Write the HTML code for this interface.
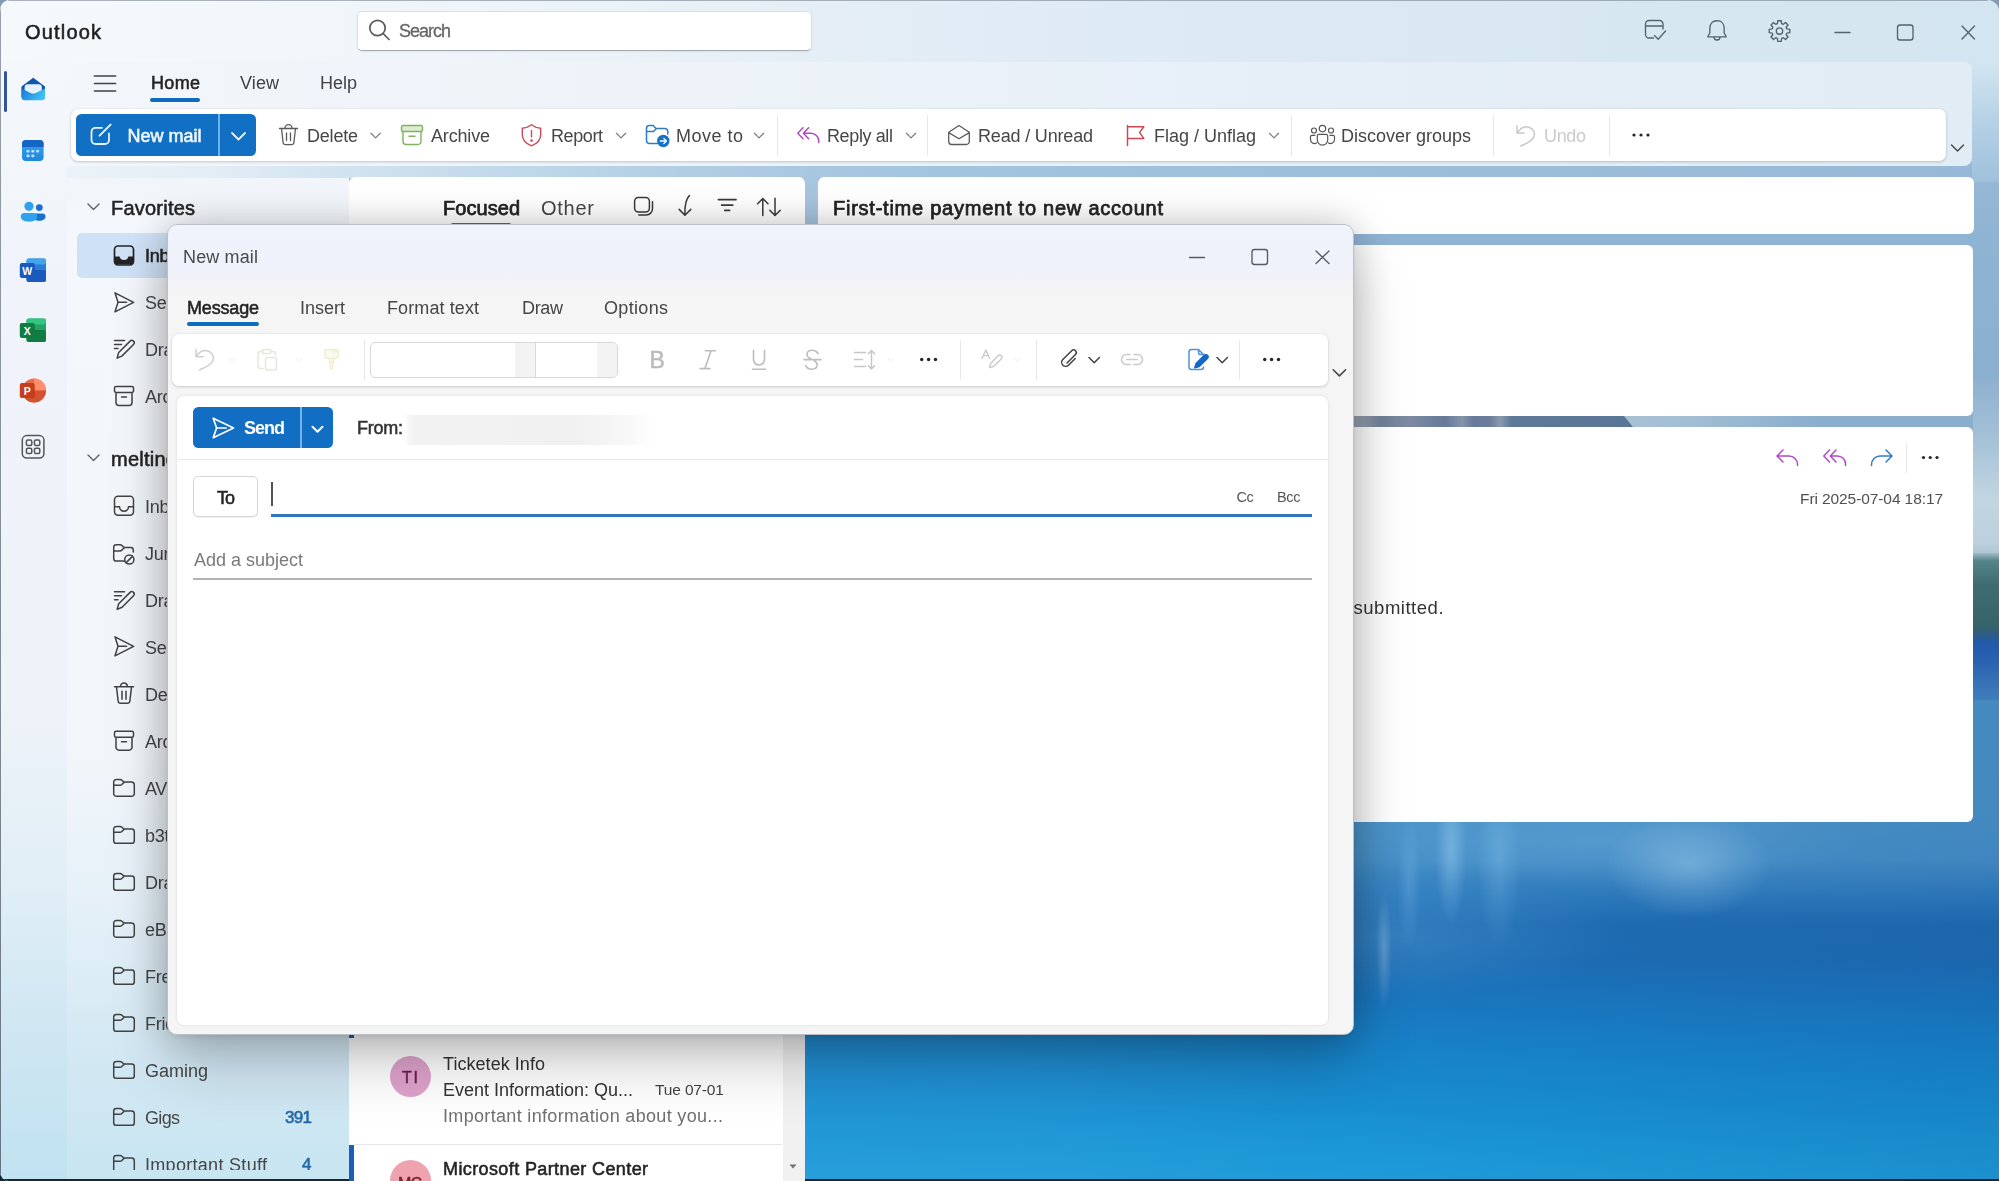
<!DOCTYPE html>
<html lang="en">
<head>
<meta charset="utf-8">
<title>Outlook - New mail</title>
<style>
*{box-sizing:border-box;margin:0;padding:0}
html,body{width:1999px;height:1181px;overflow:hidden;background:linear-gradient(180deg,#7f9bb5 0,#7f9bb5 50%,#1b2430 50%,#1b2430 100%)}
body{font-family:"Liberation Sans",sans-serif;position:relative}
#root{position:absolute;left:0;top:0;width:1999px;height:1181px;overflow:hidden;border-radius:10px 12px 0 9px;
 background:linear-gradient(180deg,#dfeaf4 0px,#c9dcec 60px,#a6c4dd 120px,#97b9d7 170px,#8fb3d2 240px,#8aaecd 420px,#86abc9 560px,#3f8fca 700px,#2a7fc2 830px,#1f78be 1000px,#1c8fd2 1110px,#1e9ad9 1181px)}
.abs{position:absolute}
.t{position:absolute;white-space:pre;font-family:"Liberation Sans",sans-serif}
svg{position:absolute;overflow:visible}
.panel{position:absolute;background:#fff}
.tl{position:absolute;left:0;top:0;width:1999px;height:1181px;will-change:transform}
.ic{fill:none;stroke:#424242;stroke-width:1.5;stroke-linecap:round;stroke-linejoin:round}
.sep{position:absolute;width:1px;background:#e8e8e8}
</style>
</head>
<body>
<div id="root">

<!-- ===== wallpaper details (right strip, water) ===== -->
<div class="abs" id="sky-right" style="left:1973px;top:380px;width:26px;height:185px;background:linear-gradient(180deg,#8fb1cf 0,#a3c0d7 30%,#c2d6e2 65%,#bcd1dd 88%,#9dbbc8 100%)"></div>
<div class="abs" id="trees" style="left:1973px;top:553px;width:26px;height:160px;background:linear-gradient(180deg,#9dbbc8 0,#55838a 5%,#3f6c73 20%,#36626a 46%,#2c5c86 51%,#2259ab 56%,#2a62b0 68%,#3872b6 82%,#4487c2 100%)"></div>
<div class="abs" id="water" style="left:349px;top:700px;width:1650px;height:481px;background:
 radial-gradient(ellipse 16px 75px at 1102px 150px,rgba(160,210,242,.45),rgba(160,210,242,0) 100%),
 radial-gradient(ellipse 22px 90px at 1150px 160px,rgba(150,205,240,.28),rgba(150,205,240,0) 100%),
 radial-gradient(ellipse 8px 60px at 1035px 250px,rgba(170,210,240,.35),rgba(170,210,240,0) 100%),
 radial-gradient(ellipse 12px 70px at 1060px 180px,rgba(150,200,238,.25),rgba(150,200,238,0) 100%),
 radial-gradient(ellipse 260px 70px at 1040px 235px,rgba(90,160,215,.35),rgba(90,160,215,0) 90%),
 radial-gradient(ellipse 110px 70px at 1340px 165px,rgba(170,210,238,.42),rgba(170,210,238,0) 75%),
 radial-gradient(ellipse 330px 60px at 1250px 140px,rgba(120,180,225,.30),rgba(120,180,225,0) 80%),
 linear-gradient(90deg,rgba(70,170,225,.28) 0,rgba(70,170,225,.16) 700px,rgba(10,40,110,.0) 1000px,rgba(10,40,110,.10) 1650px),
 linear-gradient(180deg,#4c94c8 0,#4a94ca 122px,#4690c8 160px,#2e7cbe 196px,#1f6db3 225px,#1d6eb5 262px,#1a77bf 300px,#1783c9 350px,#178dd0 400px,#1b97d6 450px,#1f9cd9 481px)"></div>

<!-- ===== acrylic chrome ===== -->
<div class="abs" id="titlebar" style="left:0;top:0;width:1999px;height:74px;background:linear-gradient(90deg,#f6f9fc 0,#eef4f9 25%,#e0ebf5 50%,#d9e8f2 75%,#d3e5f0 100%)"></div>
<div class="abs" id="right-edge" style="left:1972px;top:62px;width:27px;height:120px;background:linear-gradient(180deg,#d3e5f0 0,#b5d1e6 50%,#9fc0dc 100%)"></div>
<div class="abs" id="rail" style="left:0;top:62px;width:67px;height:1119px;background:linear-gradient(180deg,#f4f7fb 0,#f0f4fa 20%,#eef3f9 58%,#e0eef6 74%,#cde6f2 88%,#c0e2f0 100%)"></div>
<div class="abs" id="folderpane" style="left:67px;top:160px;width:282px;height:1021px;background:linear-gradient(180deg,#f0f4fa 0,#f4f7fb 60px,#f2f6fb 58%,#e4f0f8 74%,#d2e8f3 88%,#c8e5f2 100%)"></div>
<div class="abs" id="ribbonpanel" style="left:66px;top:62px;width:1906px;height:104px;border-radius:8px 8px 8px 0;background:linear-gradient(90deg,#f3f6fb 0,#edf3f9 35%,#e7eff8 60%,#e1ecf5 100%)"></div>
<div class="abs" id="edge-l" style="left:0;top:0;width:1.3px;height:1181px;background:linear-gradient(180deg,rgba(90,100,112,.0) 0,rgba(90,100,112,.6) 14px,rgba(80,90,102,.8) 100%)"></div>
<div class="abs" id="edge-t" style="left:8px;top:0;width:1980px;height:1px;background:rgba(120,130,142,.6)"></div>
<div class="abs" id="edge-b" style="left:0;top:1178.6px;width:1999px;height:3px;background:#1b2430"></div>

<div class="abs" id="strip1" style="left:67px;top:166px;width:1905px;height:12px;background:linear-gradient(90deg,#ebf2f8 0,#e4eef6 133px,#d2e3f0 273px,#c1d9ea 433px,#afcde3 633px,#a4c5de 833px,#9dbfdb 1233px,#97b9d7 1905px)"></div>
<!-- ===== panels ===== -->
<div class="panel" id="search" style="left:357px;top:10.5px;width:455px;height:40px;border-radius:5px;border:1px solid #dadfe5;border-bottom:1.6px solid #a3a9b1;box-shadow:0 1px 2px rgba(0,0,0,.06)"></div>
<div class="panel" id="ribbon" style="left:71px;top:109px;width:1875px;height:52px;border-radius:7px;box-shadow:0 1px 3px rgba(0,0,0,.18),0 0 2px rgba(0,0,0,.08)"></div>
<div class="sep" style="left:777px;top:115px;height:41px"></div>
<div class="sep" style="left:927px;top:115px;height:41px"></div>
<div class="sep" style="left:1291px;top:115px;height:41px"></div>
<div class="sep" style="left:1493px;top:115px;height:41px"></div>
<div class="sep" style="left:1609px;top:115px;height:41px"></div>
<div class="abs" id="newmail" style="left:76px;top:114px;width:180px;height:41.5px;border-radius:5.5px;background:#116fc4"></div>
<div class="abs" style="left:218px;top:114px;width:2.2px;height:41.5px;background:#6eb2ec"></div>
<div class="abs" id="home-ul" style="left:150px;top:98px;width:50px;height:4px;border-radius:2px;background:#0f6cbd"></div>
<div class="abs" id="rail-ind" style="left:4px;top:71px;width:3px;height:41px;border-radius:2px;background:#33569b"></div>

<div class="abs" id="fav-sel" style="left:77px;top:233px;width:120px;height:45px;border-radius:5px;background:#cfe1f6"></div>

<div class="abs" id="gap1" style="left:805px;top:166px;width:13px;height:70px;background:linear-gradient(180deg,#a8c7e0 0,#a3c3dd 100%)"></div>
<div class="panel" id="msglist" style="left:349px;top:177px;width:456px;height:1004px;border-radius:6px 6px 0 0"></div>
<div class="abs" id="foc-ul" style="left:451px;top:222.5px;width:60px;height:3px;border-radius:1.5px;background:#2f6fb5"></div>
<div class="abs" id="msg-scroll" style="left:783px;top:225px;width:22px;height:956px;background:#f1f1f1"></div>
<div class="abs" style="left:349px;top:1034px;width:5px;height:4px;background:#1a5fb4"></div>
<div class="abs" id="msg-div" style="left:354px;top:1144px;width:428px;height:1px;background:#e6e6e6"></div>
<div class="abs" id="msg-bar" style="left:349px;top:1145px;width:5px;height:36px;background:#1a5fb4"></div>
<div class="abs" id="av1" style="left:390px;top:1056px;width:41px;height:41px;border-radius:50%;background:#dfa3cc"></div>
<div class="abs" id="av2" style="left:390px;top:1160px;width:41px;height:41px;border-radius:50%;background:#efa3ae"></div>

<div class="panel" id="rp1" style="left:818px;top:177px;width:1156px;height:57px;border-radius:6px"></div>
<div class="abs" id="strip2b" style="left:1620px;top:416px;width:200px;height:11px;background:linear-gradient(90deg,#a9c1d5 0,#a4bed4 30%,rgba(143,178,208,0) 100%)"></div>
<div class="abs" id="strip2" style="left:1340px;top:416px;width:293px;height:11px;clip-path:polygon(0 0,284px 0,293px 11px,0 11px);background:linear-gradient(90deg,#a3abb9 0,#8f99ab 26px,#6f8199 40px,#7c8ba1 70px,#66799a 105px,#8494a9 122px,#66799a 134px,#6a7f9c 150px,#8a99ad 160px,#5d7897 172px,#5a7696 293px)"></div>
<div class="panel" id="rp2" style="left:818px;top:245px;width:1155px;height:171px;border-radius:6px"></div>
<div class="panel" id="rp3" style="left:818px;top:427px;width:1155px;height:395px;border-radius:6px"></div>
<div class="sep" style="left:1906px;top:443px;height:30px"></div>

<svg id="bgicons" style="left:0;top:0" width="1999" height="1181" viewBox="0 0 1999 1181">
<!-- search -->
<g class="ic" style="stroke:#5c5c5c;stroke-width:1.7"><circle cx="377.5" cy="28" r="7.7"/><path d="M383.2 33.7 L389 39.5"/></g>
<!-- titlebar right -->
<g class="ic" style="stroke:#55626e;stroke-width:1.35">
<path d="M1663 29 V24 a3.5 3.5 0 0 0 -3.5 -3.5 h-10.5 a3.5 3.5 0 0 0 -3.5 3.5 v10.5 a3.5 3.5 0 0 0 3.5 3.5 h4.5 M1645.5 26 h17.5 M1654.5 35.5 l3.7 3.7 l7.3 -8.2"/>
<path d="M1717 20.7 c-4.6 0 -7.2 3.4 -7.2 7.6 v4.7 l-2 3.8 h18.4 l-2 -3.8 v-4.7 c0 -4.2 -2.6 -7.6 -7.2 -7.6z M1714 37 a3 3 0 0 0 6 0"/>
<path d="M1777.4 23.6 L1777.8 20.7 L1781.2 20.7 L1781.6 23.6 L1783.3 24.3 L1785.5 22.5 L1788.0 25.0 L1786.2 27.2 L1786.9 28.9 L1789.8 29.3 L1789.8 32.7 L1786.9 33.1 L1786.2 34.8 L1788.0 37.0 L1785.5 39.5 L1783.3 37.7 L1781.6 38.4 L1781.2 41.3 L1777.8 41.3 L1777.4 38.4 L1775.7 37.7 L1773.5 39.5 L1771.0 37.0 L1772.8 34.8 L1772.1 33.1 L1769.2 32.7 L1769.2 29.3 L1772.1 28.9 L1772.8 27.2 L1771.0 25.0 L1773.5 22.5 L1775.7 24.3z"/><circle cx="1779.5" cy="31" r="3.2"/>
<path d="M1835 32.5 h15"/>
<rect x="1897.5" y="25" width="15.5" height="15" rx="2.5"/>
<path d="M1962 26 l12.5 13 M1974.5 26 l-12.5 13"/>
</g>
<!-- hamburger -->
<g class="ic" style="stroke:#424242;stroke-width:1.7"><path d="M94.5 76 h21 M94.5 83.5 h21 M94.5 91 h21"/></g>
<!-- new mail icon + chevron -->
<g class="ic" style="stroke:#e6f3ff;stroke-width:1.8">
<path d="M102 127.8 h-6.5 a4 4 0 0 0 -4 4 v8.2 a4 4 0 0 0 4 4 h9.5 a4 4 0 0 0 4 -4 v-6.5"/>
<path d="M99.6 135.6 L110.6 124.6" style="stroke-width:2"/>
<path d="M232 133 l6.5 6.5 l6.5 -6.5"/>
</g>
<!-- delete -->
<g class="ic" style="stroke:#5a5a5a;stroke-width:1.3">
<path d="M279.5 128.5 h18 M285 128.2 a3.5 3.5 0 0 1 7 0 M281.5 128.5 l1.6 14 a2.5 2.5 0 0 0 2.5 2.2 h5.8 a2.5 2.5 0 0 0 2.5 -2.2 l1.6 -14 M286.5 133 v7.5 M290.5 133 v7.5"/>
</g>
<!-- small chevrons -->
<g class="ic" style="stroke:#7e7e7e;stroke-width:1.25">
<path d="M371 133.3 l4.6 4.6 l4.6 -4.6 M616.4 133.3 l4.6 4.6 l4.6 -4.6 M754.4 133.3 l4.6 4.6 l4.6 -4.6 M906.4 133.3 l4.6 4.6 l4.6 -4.6 M1269.4 133.3 l4.6 4.6 l4.6 -4.6"/>
</g>
<!-- archive (green) -->
<g class="ic" style="stroke:#7db261;stroke-width:1.4">
<rect x="401.5" y="125.5" width="21" height="6" rx="1.6" style="fill:#deecd0"/><path d="M403 131.5 v10 a3 3 0 0 0 3 3 h12 a3 3 0 0 0 3 -3 v-10 M409 136.2 h6"/>
</g>
<!-- report (red shield) -->
<g class="ic" style="stroke:#cc4a58;stroke-width:1.4">
<path d="M531.5 124.8 c3 2.4 6 3.2 9.2 3.4 v6.4 c0 5.6 -3.6 9.2 -9.2 11.2 c-5.6 -2 -9.2 -5.6 -9.2 -11.2 v-6.4 c3.2 -0.2 6.2 -1 9.2 -3.4z M531.5 130.5 v6.5"/><circle cx="531.5" cy="140.6" r="0.6"/>
</g>
<!-- move to -->
<g class="ic" style="stroke:#2f7cc4;stroke-width:1.5">
<path d="M658 143.5 h-8.5 a3 3 0 0 1 -3 -3 v-12 a3 3 0 0 1 3 -3 h3.6 l3 3 h8.7 a3 3 0 0 1 3 3 v2.5 M646.5 131.5 h7 l3 -3"/>
</g>
<circle cx="663.3" cy="141" r="6.2" fill="#1673c9"/>
<path d="M660.3 141 h6 M663.8 138.4 l2.6 2.6 l-2.6 2.6" fill="none" stroke="#fff" stroke-width="1.3" stroke-linecap="round" stroke-linejoin="round"/>
<!-- reply all (purple) -->
<g class="ic" style="stroke:#b04ac4;stroke-width:1.5">
<path d="M803 127.7 l-5.2 5.5 l5.2 5.5 M808.6 127.7 l-5.2 5.5 l5.2 5.5 M803.8 133.2 h7 a8 8 0 0 1 8 8 v1.3"/>
</g>
<!-- read/unread -->
<g class="ic" style="stroke:#5a5a5a;stroke-width:1.3">
<path d="M948.7 132.3 l10.3 -6.8 l10.3 6.8 v9.2 a3 3 0 0 1 -3 3 h-14.6 a3 3 0 0 1 -3 -3 z M948.7 132.6 l10.3 6.2 l10.3 -6.2"/>
</g>
<!-- flag -->
<g class="ic" style="stroke:#cc4a58;stroke-width:1.5">
<path d="M1127.5 125.5 v20 M1127.5 126.8 h16.3 l-4.2 5.8 l4.2 5.8 h-16.3"/>
</g>
<!-- discover groups -->
<g class="ic" style="stroke:#555;stroke-width:1.2">
<circle cx="1322.5" cy="128.6" r="3.2"/><circle cx="1314" cy="130.5" r="2.5"/><circle cx="1331" cy="130.5" r="2.5"/>
<path d="M1317.3 136 a1.6 1.6 0 0 1 1.6 -1.6 h7.2 a1.6 1.6 0 0 1 1.6 1.6 v4 a5.2 5.2 0 0 1 -10.4 0 z"/>
<path d="M1315 135.3 h-3 a1.5 1.5 0 0 0 -1.5 1.5 v2.7 a4 4 0 0 0 6 3.5 M1330 135.3 h3 a1.5 1.5 0 0 1 1.5 1.5 v2.7 a4 4 0 0 1 -6 3.5"/>
</g>
<!-- undo (disabled) -->
<g class="ic" style="stroke:#c9c9c9;stroke-width:1.5">
<path d="M1517 125.8 v7.2 h7.2 M1517.6 132.4 c3 -4.4 7.4 -6.4 11.4 -5.2 c4.6 1.4 6.6 6 4.6 10.2 c-1.6 3.2 -6.6 6 -13 8.6"/>
</g>
<g fill="#242424"><circle cx="1634" cy="135" r="1.6"/><circle cx="1641" cy="135" r="1.6"/><circle cx="1648" cy="135" r="1.6"/></g>
<g class="ic" style="stroke:#424242;stroke-width:1.4"><path d="M1951.5 145 l6 6 l6 -6"/></g>
<!-- section chevrons -->
<g class="ic" style="stroke:#616161;stroke-width:1.4"><path d="M88 204 l5.5 5.5 l5.5 -5.5 M88 455 l5.5 5.5 l5.5 -5.5"/></g>
<g class="ic" style="stroke:#242424;stroke-width:1.7">
<path d="M118.0 246.0 h12 a3.5 3.5 0 0 1 3.5 3.5 v12 a3.5 3.5 0 0 1 -3.5 3.5 h-12 a3.5 3.5 0 0 1 -3.5 -3.5 v-12 a3.5 3.5 0 0 1 3.5 -3.5z"/>
</g>
<path d="M115 256.5 h4.6 a4.5 4.5 0 0 0 8.8 0 h4.6 v5.5 a2.6 2.6 0 0 1 -2.6 2.6 h-12.8 a2.6 2.6 0 0 1 -2.6 -2.6z" fill="#242424"/>
<g class="ic" style="stroke:#424242;stroke-width:1.5">
<path d="M115 292.8 l18.6 9.5 l-18.6 9.5 l3 -9.5 z M118 302.3 h8.5"/>
<path d="M114.5 340.5 h10 M114.5 344.5 h7 M114.5 348.5 h3.5 M117.1 358.1 l1.6 -5.6 l11.4 -11.4 a2.4 2.4 0 0 1 3.4 3.4 l-11.4 11.4 z"/>
<path d="M116.0 386.5 h16 a1.5 1.5 0 0 1 1.5 1.5 v3 a1.5 1.5 0 0 1 -1.5 1.5 h-16 a1.5 1.5 0 0 1 -1.5 -1.5 v-3 a1.5 1.5 0 0 1 1.5 -1.5z M116.0 392.5 v10 a3 3 0 0 0 3 3 h10 a3 3 0 0 0 3 -3 v-10 M121.5 397.0 h5"/>
<path d="M118.0 496.2 h12 a3.5 3.5 0 0 1 3.5 3.5 v12 a3.5 3.5 0 0 1 -3.5 3.5 h-12 a3.5 3.5 0 0 1 -3.5 -3.5 v-12 a3.5 3.5 0 0 1 3.5 -3.5z M114.5 506.7 h5 a4.5 4.5 0 0 0 9 0 h5"/>
<path d="M124.7 561.0 h-8.4 a2.6 2.6 0 0 1 -2.6 -2.6 v-11 a2.6 2.6 0 0 1 2.6 -2.6 h3.8 c0.8 0 1.4 0.3 1.9 0.8 l1.9 1.8 h6.8 a2.6 2.6 0 0 1 2.6 2.6 v2 M113.7 550.9 h6.2 c0.8 0 1.4 -0.3 1.9 -0.8 l2.5 -2.4"/><circle cx="129.3" cy="559.5" r="4.6"/><path d="M126.2 562.6 l6.2 -6.2"/>
<path d="M114.5 591.8 h10 M114.5 595.8 h7 M114.5 599.8 h3.5 M117.1 609.4 l1.6 -5.6 l11.4 -11.4 a2.4 2.4 0 0 1 3.4 3.4 l-11.4 11.4 z"/>
<path d="M115 636.8 l18.6 9.5 l-18.6 9.5 l3 -9.5 z M118 646.3 h8.5"/>
<path d="M114.5 686.8 h19 M120.5 686.5999999999999 a3.5 3.5 0 0 1 7 0 M116.5 686.8 l1.6 14.2 a2.6 2.6 0 0 0 2.6 2.3 h6.6 a2.6 2.6 0 0 0 2.6 -2.3 l1.6 -14.2 M122.0 691.3 v8 M126.0 691.3 v8"/>
<path d="M116.0 731.2 h16 a1.5 1.5 0 0 1 1.5 1.5 v3 a1.5 1.5 0 0 1 -1.5 1.5 h-16 a1.5 1.5 0 0 1 -1.5 -1.5 v-3 a1.5 1.5 0 0 1 1.5 -1.5z M116.0 737.2 v10 a3 3 0 0 0 3 3 h10 a3 3 0 0 0 3 -3 v-10 M121.5 741.7 h5"/>
<path d="M113.7 782.1 a2.6 2.6 0 0 1 2.6 -2.6 h3.8 c0.8 0 1.4 0.3 1.9 0.8 l1.9 1.8 h7.8 a2.6 2.6 0 0 1 2.6 2.6 v9 a2.6 2.6 0 0 1 -2.6 2.6 h-15.4 a2.6 2.6 0 0 1 -2.6 -2.6 z M113.7 785.3 h6.2 c0.8 0 1.4 -0.3 1.9 -0.8 l2.5 -2.4"/>
<path d="M113.7 829.1 a2.6 2.6 0 0 1 2.6 -2.6 h3.8 c0.8 0 1.4 0.3 1.9 0.8 l1.9 1.8 h7.8 a2.6 2.6 0 0 1 2.6 2.6 v9 a2.6 2.6 0 0 1 -2.6 2.6 h-15.4 a2.6 2.6 0 0 1 -2.6 -2.6 z M113.7 832.3 h6.2 c0.8 0 1.4 -0.3 1.9 -0.8 l2.5 -2.4"/>
<path d="M113.7 876.1 a2.6 2.6 0 0 1 2.6 -2.6 h3.8 c0.8 0 1.4 0.3 1.9 0.8 l1.9 1.8 h7.8 a2.6 2.6 0 0 1 2.6 2.6 v9 a2.6 2.6 0 0 1 -2.6 2.6 h-15.4 a2.6 2.6 0 0 1 -2.6 -2.6 z M113.7 879.3 h6.2 c0.8 0 1.4 -0.3 1.9 -0.8 l2.5 -2.4"/>
<path d="M113.7 923.1 a2.6 2.6 0 0 1 2.6 -2.6 h3.8 c0.8 0 1.4 0.3 1.9 0.8 l1.9 1.8 h7.8 a2.6 2.6 0 0 1 2.6 2.6 v9 a2.6 2.6 0 0 1 -2.6 2.6 h-15.4 a2.6 2.6 0 0 1 -2.6 -2.6 z M113.7 926.3 h6.2 c0.8 0 1.4 -0.3 1.9 -0.8 l2.5 -2.4"/>
<path d="M113.7 970.1 a2.6 2.6 0 0 1 2.6 -2.6 h3.8 c0.8 0 1.4 0.3 1.9 0.8 l1.9 1.8 h7.8 a2.6 2.6 0 0 1 2.6 2.6 v9 a2.6 2.6 0 0 1 -2.6 2.6 h-15.4 a2.6 2.6 0 0 1 -2.6 -2.6 z M113.7 973.3 h6.2 c0.8 0 1.4 -0.3 1.9 -0.8 l2.5 -2.4"/>
<path d="M113.7 1017.1 a2.6 2.6 0 0 1 2.6 -2.6 h3.8 c0.8 0 1.4 0.3 1.9 0.8 l1.9 1.8 h7.8 a2.6 2.6 0 0 1 2.6 2.6 v9 a2.6 2.6 0 0 1 -2.6 2.6 h-15.4 a2.6 2.6 0 0 1 -2.6 -2.6 z M113.7 1020.3 h6.2 c0.8 0 1.4 -0.3 1.9 -0.8 l2.5 -2.4"/>
<path d="M113.7 1064.1 a2.6 2.6 0 0 1 2.6 -2.6 h3.8 c0.8 0 1.4 0.3 1.9 0.8 l1.9 1.8 h7.8 a2.6 2.6 0 0 1 2.6 2.6 v9 a2.6 2.6 0 0 1 -2.6 2.6 h-15.4 a2.6 2.6 0 0 1 -2.6 -2.6 z M113.7 1067.3 h6.2 c0.8 0 1.4 -0.3 1.9 -0.8 l2.5 -2.4"/>
<path d="M113.7 1111.1 a2.6 2.6 0 0 1 2.6 -2.6 h3.8 c0.8 0 1.4 0.3 1.9 0.8 l1.9 1.8 h7.8 a2.6 2.6 0 0 1 2.6 2.6 v9 a2.6 2.6 0 0 1 -2.6 2.6 h-15.4 a2.6 2.6 0 0 1 -2.6 -2.6 z M113.7 1114.3 h6.2 c0.8 0 1.4 -0.3 1.9 -0.8 l2.5 -2.4"/>
<path d="M113.7 1158.1 a2.6 2.6 0 0 1 2.6 -2.6 h3.8 c0.8 0 1.4 0.3 1.9 0.8 l1.9 1.8 h7.8 a2.6 2.6 0 0 1 2.6 2.6 v9 a2.6 2.6 0 0 1 -2.6 2.6 h-15.4 a2.6 2.6 0 0 1 -2.6 -2.6 z M113.7 1161.3 h6.2 c0.8 0 1.4 -0.3 1.9 -0.8 l2.5 -2.4"/>
</g>
<!-- list header icons -->
<g class="ic" style="stroke:#3a3a3a;stroke-width:1.5">
<rect x="634.6" y="197.4" width="14.8" height="14.6" rx="3.8"/><path d="M638.8 215 h7.4 a6.3 6.3 0 0 0 6.3 -6.3 v-6.9"/>
<path d="M689.4 195.6 C685.6 199.2 684.6 204.5 684.9 215 M679.2 209.4 l5.7 5.8 l5.9 -5.8"/>
<path d="M718.4 199.6 h17.6 M721.6 205.1 h11.2 M724.8 210.4 h4.8" style="stroke-width:1.7"/>
<path d="M762.8 215.6 v-17 M757.6 203.8 l5.2 -5.3 l5.2 5.3 M775 198.2 v17 M769.8 210.2 l5.2 5.3 l5.2 -5.3"/>
</g>
<!-- reading pane actions -->
<g class="ic" style="stroke:#b04ac4;stroke-width:1.5">
<path d="M1783 450 l-6 6 l6 6 M1777.5 456 h11.5 a8.5 8.5 0 0 1 8.5 8.5 v1"/>
<path d="M1829.5 450 l-5.7 6 l5.7 6 M1836 450 l-5.7 6 l5.7 6 M1831 456 h6.5 a8 8 0 0 1 8 8 v1.5"/>
</g>
<g class="ic" style="stroke:#2f7cc4;stroke-width:1.5">
<path d="M1886 450 l6 6 l-6 6 M1891.5 456 h-11.5 a8.5 8.5 0 0 0 -8.5 8.5 v1"/>
</g>
<g fill="#242424"><circle cx="1923.5" cy="457.5" r="1.6"/><circle cx="1930.2" cy="457.5" r="1.6"/><circle cx="1937" cy="457.5" r="1.6"/></g>
<path d="M789.5 1164.5 h7 l-3.5 4z" fill="#707070"/>

<defs>
<linearGradient id="gm" x1="0" y1="0" x2="1" y2="0.4"><stop offset="0" stop-color="#1976d6"/><stop offset="1" stop-color="#3cc0f5"/></linearGradient>
<linearGradient id="gc" x1="0" y1="0" x2="0" y2="1"><stop offset="0" stop-color="#38a6ee"/><stop offset="1" stop-color="#1f86de"/></linearGradient>
</defs>
<!-- mail -->
<path d="M21.5 86.5 L33.2 77.8 L45 86.5 V96 a3.5 3.5 0 0 1 -3.5 3.5 H25 a3.5 3.5 0 0 1 -3.5 -3.5z" fill="#0f56b0"/>
<rect x="24.6" y="84.2" width="17.2" height="9.5" rx="3.2" fill="#e4f2fc"/>
<path d="M21.5 88.5 L33.2 94.2 L45 88.5 V96.8 a3.5 3.5 0 0 1 -3.5 3.5 H25 a3.5 3.5 0 0 1 -3.5 -3.5z" fill="url(#gm)"/>
<!-- calendar -->
<rect x="22" y="140" width="21.6" height="21" rx="4" fill="url(#gc)"/>
<path d="M22 147 v-3 a4 4 0 0 1 4 -4 h13.6 a4 4 0 0 1 4 4 v3z" fill="#1565c4"/>
<g fill="#bfe3fb"><rect x="26.5" y="150" width="3" height="2.6" rx=".8"/><rect x="31.3" y="150" width="3" height="2.6" rx=".8"/><rect x="36.1" y="150" width="3" height="2.6" rx=".8"/><rect x="26.5" y="154.6" width="3" height="2.6" rx=".8"/><rect x="31.3" y="154.6" width="3" height="2.6" rx=".8"/></g>
<!-- people -->
<circle cx="39.3" cy="207.6" r="3.4" fill="#1a6fd2"/>
<path d="M33 216.5 a3 3 0 0 1 3 -3 h6.5 a3 3 0 0 1 3 3 c0 2.6 -2.4 4.3 -6.2 4.3 s-6.3 -1.7 -6.3 -4.3z" fill="#1a6fd2"/>
<circle cx="29" cy="206.3" r="4.6" fill="#2ea2ec"/>
<path d="M20.8 216.6 a3.6 3.6 0 0 1 3.6 -3.6 h9.2 a3.6 3.6 0 0 1 3.6 3.6 c0 3.2 -3.2 5.2 -8.2 5.2 s-8.2 -2 -8.2 -5.2z" fill="#2ea2ec"/>
<!-- word -->
<rect x="26.5" y="258.5" width="19.5" height="23.5" rx="2.2" fill="#2b7cd3"/>
<rect x="26.5" y="258.5" width="19.5" height="6" rx="2.2" fill="#41a5ee"/>
<rect x="26.5" y="270" width="19.5" height="12" rx="2.2" fill="#185abd"/>
<rect x="19.8" y="263" width="15" height="15" rx="2" fill="#185abd"/>
<text x="27.3" y="274.6" font-family="Liberation Sans, sans-serif" font-size="10.5" font-weight="700" fill="#fff" text-anchor="middle">W</text>
<!-- excel -->
<rect x="26.5" y="318.5" width="19.5" height="23.5" rx="2.2" fill="#21a366"/>
<rect x="26.5" y="318.5" width="19.5" height="6" rx="2.2" fill="#33c481"/>
<rect x="26.5" y="330" width="19.5" height="12" rx="2.2" fill="#107c41"/>
<rect x="19.8" y="323" width="15" height="15" rx="2" fill="#107c41"/>
<text x="27.3" y="334.6" font-family="Liberation Sans, sans-serif" font-size="10.5" font-weight="700" fill="#fff" text-anchor="middle">X</text>
<!-- powerpoint -->
<circle cx="34" cy="390.6" r="12" fill="#ed6c47"/>
<path d="M34 378.6 a12 12 0 0 1 12 12 h-12z" fill="#ff8f6b"/>
<path d="M22 390.6 h24 a12 12 0 0 1 -24 0z" fill="#d35230"/>
<rect x="19.8" y="383" width="15" height="15" rx="2" fill="#c43e1c"/>
<text x="27.3" y="394.6" font-family="Liberation Sans, sans-serif" font-size="10.5" font-weight="700" fill="#fff" text-anchor="middle">P</text>
<!-- apps -->
<g class="ic" style="stroke:#555;stroke-width:1.5">
<rect x="22.3" y="435.6" width="21.6" height="22.4" rx="4.5"/>
<rect x="26.4" y="440" width="5.4" height="5.4" rx="1.5"/><rect x="34.4" y="440" width="5.4" height="5.4" rx="1.5"/>
<rect x="26.4" y="448.2" width="5.4" height="5.4" rx="1.5"/><rect x="34.4" y="448.2" width="5.4" height="5.4" rx="1.5"/>
</g>

</svg>


<div class="tl">
<span class="t" style="left:25px;top:18.5px;line-height:26px;font-size:20px;font-weight:400;-webkit-text-stroke:0.55px currentColor;color:#1f1f1f;letter-spacing:1.18px;">Outlook</span>
<span class="t" style="left:399px;top:19.5px;line-height:23px;font-size:18px;font-weight:400;-webkit-text-stroke:0.3px currentColor;color:#666;letter-spacing:-1.01px;">Search</span>
<span class="t" style="left:151px;top:72.0px;line-height:23px;font-size:18px;font-weight:400;-webkit-text-stroke:0.55px currentColor;color:#242424;letter-spacing:0.33px;">Home</span>
<span class="t" style="left:240px;top:72.0px;line-height:23px;font-size:18px;font-weight:400;color:#424242;letter-spacing:0.10px;">View</span>
<span class="t" style="left:320px;top:72.0px;line-height:23px;font-size:18px;font-weight:400;color:#424242;letter-spacing:-0.01px;">Help</span>
<span class="t" style="left:127.5px;top:124.5px;line-height:23px;font-size:18px;font-weight:400;-webkit-text-stroke:0.55px currentColor;color:#f0f8ff;letter-spacing:-0.00px;">New mail</span>
<span class="t" style="left:307px;top:124.5px;line-height:23px;font-size:18px;font-weight:400;color:#464646;letter-spacing:-0.21px;">Delete</span>
<span class="t" style="left:431px;top:124.5px;line-height:23px;font-size:18px;font-weight:400;color:#464646;letter-spacing:-0.17px;">Archive</span>
<span class="t" style="left:551px;top:124.5px;line-height:23px;font-size:18px;font-weight:400;color:#464646;letter-spacing:-0.41px;">Report</span>
<span class="t" style="left:676px;top:124.5px;line-height:23px;font-size:18px;font-weight:400;color:#464646;letter-spacing:0.49px;">Move to</span>
<span class="t" style="left:827px;top:124.5px;line-height:23px;font-size:18px;font-weight:400;color:#464646;letter-spacing:-0.38px;">Reply all</span>
<span class="t" style="left:978px;top:124.5px;line-height:23px;font-size:18px;font-weight:400;color:#464646;letter-spacing:-0.17px;">Read / Unread</span>
<span class="t" style="left:1154px;top:124.5px;line-height:23px;font-size:18px;font-weight:400;color:#464646;letter-spacing:-0.01px;">Flag / Unflag</span>
<span class="t" style="left:1341px;top:124.5px;line-height:23px;font-size:18px;font-weight:400;color:#464646;letter-spacing:-0.00px;">Discover groups</span>
<span class="t" style="left:1544px;top:124.5px;line-height:23px;font-size:18px;font-weight:400;color:#cbcbcb;letter-spacing:-0.34px;">Undo</span>
<span class="t" style="left:111px;top:195.0px;line-height:26px;font-size:20px;font-weight:400;-webkit-text-stroke:0.55px currentColor;color:#242424;letter-spacing:0.22px;">Favorites</span>
<span class="t" style="left:145px;top:244.5px;line-height:23px;font-size:18px;font-weight:400;-webkit-text-stroke:0.55px currentColor;color:#242424;letter-spacing:-0.30px;">Inbox</span>
<span class="t" style="left:145px;top:291.5px;line-height:23px;font-size:18px;font-weight:400;color:#464646;letter-spacing:-0.30px;">Sent Items</span>
<span class="t" style="left:145px;top:338.5px;line-height:23px;font-size:18px;font-weight:400;color:#464646;letter-spacing:-0.30px;">Drafts</span>
<span class="t" style="left:145px;top:385.5px;line-height:23px;font-size:18px;font-weight:400;color:#464646;letter-spacing:-0.30px;">Archive</span>
<span class="t" style="left:111px;top:446.0px;line-height:26px;font-size:20px;font-weight:400;-webkit-text-stroke:0.55px currentColor;color:#242424;letter-spacing:0.25px;">melting</span>
<span class="t" style="left:145px;top:495.5px;line-height:23px;font-size:18px;font-weight:400;color:#464646;letter-spacing:-0.30px;">Inbox</span>
<span class="t" style="left:145px;top:542.5px;line-height:23px;font-size:18px;font-weight:400;color:#464646;letter-spacing:-0.30px;">Junk Email</span>
<span class="t" style="left:145px;top:589.5px;line-height:23px;font-size:18px;font-weight:400;color:#464646;letter-spacing:-0.30px;">Drafts</span>
<span class="t" style="left:145px;top:636.5px;line-height:23px;font-size:18px;font-weight:400;color:#464646;letter-spacing:-0.30px;">Sent Items</span>
<span class="t" style="left:145px;top:683.5px;line-height:23px;font-size:18px;font-weight:400;color:#464646;letter-spacing:-0.30px;">Deleted Items</span>
<span class="t" style="left:145px;top:730.5px;line-height:23px;font-size:18px;font-weight:400;color:#464646;letter-spacing:-0.30px;">Archive</span>
<span class="t" style="left:145px;top:777.5px;line-height:23px;font-size:18px;font-weight:400;color:#464646;letter-spacing:-0.30px;">AV</span>
<span class="t" style="left:145px;top:824.5px;line-height:23px;font-size:18px;font-weight:400;color:#464646;letter-spacing:-0.30px;">b3ta</span>
<span class="t" style="left:145px;top:871.5px;line-height:23px;font-size:18px;font-weight:400;color:#464646;letter-spacing:-0.30px;">Drafts2</span>
<span class="t" style="left:145px;top:918.5px;line-height:23px;font-size:18px;font-weight:400;color:#464646;letter-spacing:-0.30px;">eBay</span>
<span class="t" style="left:145px;top:965.5px;line-height:23px;font-size:18px;font-weight:400;color:#464646;letter-spacing:-0.30px;">Freelance</span>
<span class="t" style="left:145px;top:1012.5px;line-height:23px;font-size:18px;font-weight:400;color:#464646;letter-spacing:-0.30px;">Friends</span>
<span class="t" style="left:145px;top:1059.5px;line-height:23px;font-size:18px;font-weight:400;color:#464646;letter-spacing:-0.01px;">Gaming</span>
<span class="t" style="left:145px;top:1106.5px;line-height:23px;font-size:18px;font-weight:400;color:#464646;letter-spacing:-0.67px;">Gigs</span>
<span class="t" style="left:285px;top:1107.0px;line-height:22px;font-size:17px;font-weight:400;-webkit-text-stroke:0.55px currentColor;color:#2468a6;letter-spacing:-0.69px;">391</span>
<span class="t" style="left:145px;top:1153.5px;line-height:23px;font-size:18px;font-weight:400;color:#464646;letter-spacing:0.30px;">Important Stuff</span>
<span class="t" style="left:302px;top:1154.0px;line-height:22px;font-size:17px;font-weight:400;-webkit-text-stroke:0.55px currentColor;color:#2468a6;letter-spacing:-0.47px;">4</span>
<span class="t" style="left:443px;top:195.0px;line-height:26px;font-size:20px;font-weight:400;-webkit-text-stroke:0.75px currentColor;color:#242424;letter-spacing:0.05px;">Focused</span>
<span class="t" style="left:541px;top:195.0px;line-height:26px;font-size:20px;font-weight:400;color:#464646;letter-spacing:0.74px;">Other</span>
<span class="t" style="left:402px;top:1066.5px;line-height:21px;font-size:16px;font-weight:400;-webkit-text-stroke:0.55px currentColor;color:#6b1f55;letter-spacing:1.78px;">TI</span>
<span class="t" style="left:443px;top:1052.5px;line-height:23px;font-size:18px;font-weight:400;color:#333;letter-spacing:0.05px;">Ticketek Info</span>
<span class="t" style="left:443px;top:1078.5px;line-height:23px;font-size:18px;font-weight:400;color:#333;letter-spacing:-0.00px;">Event Information: Qu...</span>
<span class="t" style="left:655px;top:1080.0px;line-height:20px;font-size:15.5px;font-weight:400;color:#424242;letter-spacing:-0.14px;">Tue 07-01</span>
<span class="t" style="left:443px;top:1104.5px;line-height:23px;font-size:18px;font-weight:400;color:#707070;letter-spacing:0.33px;">Important information about you...</span>
<span class="t" style="left:443px;top:1158.0px;line-height:23px;font-size:18px;font-weight:400;-webkit-text-stroke:0.55px currentColor;color:#242424;letter-spacing:0.39px;">Microsoft Partner Center</span>
<span class="t" style="left:398px;top:1172.5px;line-height:21px;font-size:16px;font-weight:400;-webkit-text-stroke:0.55px currentColor;color:#7a1f2b;letter-spacing:-0.89px;">MC</span>
<span class="t" style="left:833px;top:195.0px;line-height:26px;font-size:20px;font-weight:400;-webkit-text-stroke:0.75px currentColor;color:#242424;letter-spacing:0.76px;">First-time payment to new account</span>
<span class="t" style="left:1800px;top:489.0px;line-height:20px;font-size:15.5px;font-weight:400;color:#505050;letter-spacing:-0.09px;">Fri 2025-07-04 18:17</span>
<span class="t" style="left:1353.5px;top:596.0px;line-height:24px;font-size:18.5px;font-weight:400;color:#333;letter-spacing:0.52px;">submitted.</span>
</div>
<div class="abs" id="fp-clip" style="left:67px;top:1169.5px;width:282px;height:9.5px;background:#c8e5f2"></div>

<!-- ===== compose dialog ===== -->
<div class="abs" id="dlg" style="left:167px;top:224px;width:1187px;height:811px;border-radius:10px;border:1px solid #bbc0c7;
 background:linear-gradient(180deg,#f0f3fb 0,#eff2fb 42px,#f2f3f8 56px,#f5f5f5 70px,#f5f5f5 100%);box-shadow:0 0 40px rgba(0,0,0,.22),0 30px 60px rgba(0,0,0,.20),0 2px 5px rgba(0,0,0,.07)"></div>
<div class="abs" id="msg-ul" style="left:187px;top:322px;width:72px;height:4px;border-radius:2px;background:#0f6cbd"></div>
<div class="panel" id="dlg-tb" style="left:172px;top:334px;width:1156px;height:52px;border-radius:7px;box-shadow:0 1px 3px rgba(0,0,0,.16),0 0 2px rgba(0,0,0,.08)"></div>
<div class="panel" id="dlg-body" style="left:177px;top:396px;width:1151px;height:629px;border-radius:7px;box-shadow:0 0 3px rgba(0,0,0,.12)"></div>
<div class="abs" id="fontbox" style="left:370px;top:342px;width:248px;height:36px;border-radius:5px;border:1px solid #d9d9d9;background:#fff;overflow:hidden">
 <div class="abs" style="left:144px;top:0;width:20px;height:34px;background:#f3f3f3"></div>
 <div class="abs" style="left:164px;top:0;width:1px;height:34px;background:#d9d9d9"></div>
 <div class="abs" style="left:226px;top:0;width:22px;height:34px;background:#f3f3f3"></div>
</div>
<div class="sep" style="left:364px;top:340px;height:40px"></div>
<div class="sep" style="left:960px;top:340px;height:40px"></div>
<div class="sep" style="left:1036px;top:340px;height:40px"></div>
<div class="sep" style="left:1239px;top:340px;height:40px"></div>

<div class="abs" id="send" style="left:193px;top:406.5px;width:140.3px;height:41.3px;border-radius:5.5px;background:#126ec3"></div>
<div class="abs" style="left:300.2px;top:406.5px;width:2.3px;height:41.3px;background:#72b5ed"></div>
<div class="abs" id="from-blur" style="left:405.5px;top:414.5px;width:248px;height:30.5px;background:linear-gradient(90deg,#fafafa 0,#f2f2f2 3%,#f1f1f1 70%,#f8f8f8 90%,#fff 100%)"></div>
<div class="abs" id="div1" style="left:178px;top:459px;width:1150px;height:1px;background:#e8e8e8"></div>
<div class="abs" id="tobtn" style="left:193px;top:476px;width:65px;height:41px;border-radius:5px;border:1px solid #d6d6d6;background:#fff;box-shadow:0 1px 1px rgba(0,0,0,.06)"></div>
<div class="abs" id="cursor" style="left:271px;top:482px;width:2px;height:24px;background:#555"></div>
<div class="abs" id="to-ul" style="left:271px;top:514px;width:1041px;height:3.4px;background:#3377b7"></div>
<div class="abs" id="subj-ul" style="left:193px;top:578px;width:1119px;height:2px;background:#b3b3b3"></div>

<svg id="dlgicons" style="left:0;top:0" width="1999" height="1181" viewBox="0 0 1999 1181">
<!-- window controls -->
<g class="ic" style="stroke:#555b63;stroke-width:1.35">
<path d="M1189.5 257.5 h15"/><rect x="1252" y="249.5" width="15.5" height="15" rx="2.5"/><path d="M1316 251 l13 12.5 M1329 251 l-13 12.5"/>
</g>
<!-- undo disabled -->
<g class="ic" style="stroke:#cdcdcd;stroke-width:1.5">
<path d="M196 349.5 v7.2 h7.2 M196.6 356.2 c3 -4.4 7.4 -6.4 11.4 -5.2 c4.6 1.4 6.6 6 4.6 10.2 c-1.6 3.2 -6.6 6 -13 8.6"/>
</g>
<g class="ic" style="stroke:#f4f4f4;stroke-width:1.2"><path d="M229.5 358.5 l2.5 2.5 l2.5 -2.5 M296.5 358.5 l2.5 2.5 l2.5 -2.5 M888 358 l3 3 l3 -3 M1014.5 358 l3 3 l3 -3"/></g>
<!-- paste -->
<g class="ic" style="stroke:#e8e6d6;stroke-width:1.5">
<path d="M263 368.5 h-2.5 a2.5 2.5 0 0 1 -2.5 -2.5 v-12 a2.5 2.5 0 0 1 2.5 -2.5 h2 M271 351.5 h2 a2.5 2.5 0 0 1 2.5 2.5 v1"/>
<rect x="262.5" y="349.5" width="8.5" height="4" rx="1.6"/>
</g>
<g class="ic" style="stroke:#e6e6dc;stroke-width:1.5;fill:#fff"><rect x="265.5" y="357.5" width="11" height="12.5" rx="2.2"/></g>
<!-- format painter -->
<g class="ic" style="stroke:#f0edd0;stroke-width:1.4;fill:#fbfaf0">
<path d="M325 349.8 h13 v6.5 a2 2 0 0 1 -2 2 h-9 a2 2 0 0 1 -2 -2z M329.5 358.5 v3.5 h4 v-3.5 M329.8 362 l0.6 6.5 a1.2 1.2 0 0 0 2.2 0 l0.6 -6.5 M333.5 350 v3 M336 350 v2"/>
</g>
<!-- I U S spacing -->
<g class="ic" style="stroke:#bdbdbd;stroke-width:1.6">
<path d="M705.5 350.8 h10 M700 368.6 h10 M711 350.8 l-6 17.8"/>
<path d="M753.5 350.2 v9.3 a5.5 5.5 0 0 0 11 0 v-9.3 M752.5 369.2 h13"/>
<path d="M818 353.5 c-1.2 -2.2 -3.2 -3.2 -5.6 -3.2 c-3.3 0 -5.4 1.7 -5.4 4.2 c0 2.2 1.6 3.3 4 4.2 M814.5 361 c1.6 0.8 2.6 2 2.6 3.8 c0 2.7 -2.2 4.4 -5.5 4.4 c-2.8 0 -4.8 -1.2 -6 -3.6 M804 359.6 h17"/>
</g>
<g class="ic" style="stroke:#c6c6c6;stroke-width:1.5">
<path d="M854.5 352.5 h11 M854.5 359.5 h8 M854.5 366.5 h11 M871.5 350.5 v18.5 M868.3 353.7 l3.2 -3.2 l3.2 3.2 M868.3 365.8 l3.2 3.2 l3.2 -3.2"/>
</g>
<g fill="#242424"><circle cx="921.7" cy="359.5" r="1.7"/><circle cx="928.6" cy="359.5" r="1.7"/><circle cx="935.5" cy="359.5" r="1.7"/>
<circle cx="1264.7" cy="359.5" r="1.7"/><circle cx="1271.6" cy="359.5" r="1.7"/><circle cx="1278.5" cy="359.5" r="1.7"/></g>
<!-- styles A/ -->
<g class="ic" style="stroke:#c9c9c9;stroke-width:1.4">
<path d="M982 358.5 l3.8 -8.5 l3.8 8.5 M983.4 355.6 h4.8"/>
<path d="M989.5 367.6 l1.3 -4.4 l7.6 -7.6 a2.2 2.2 0 0 1 3.1 3.1 l-7.6 7.6 z"/>
</g>
<!-- paperclip -->
<g class="ic" style="stroke:#424242;stroke-width:1.5" transform="rotate(45 1068.5 359.5)">
<path d="M1072.5 354 v9.5 a4 4 0 0 1 -8 0 v-12.5 a2.7 2.7 0 0 1 5.4 0 v12"/>
</g>
<g class="ic" style="stroke:#424242;stroke-width:1.5"><path d="M1089 357.5 l5.2 5.2 l5.2 -5.2 M1217 357.5 l5.2 5.2 l5.2 -5.2 M1333.2 369.7 l6.2 6.2 l6.2 -6.2"/></g>
<!-- link disabled -->
<g class="ic" style="stroke:#c9c9c9;stroke-width:1.5">
<path d="M1130 354.5 h-3.5 a5 5 0 0 0 0 10 h3.5 M1134 354.5 h3.5 a5 5 0 0 1 0 10 h-3.5 M1127 359.5 h10"/>
</g>
<!-- signature -->
<g class="ic" style="stroke:#4f93d8;stroke-width:1.5">
<path d="M1203.5 354.5 l-5 -5 h-7 a2.5 2.5 0 0 0 -2.5 2.5 v15 a2.5 2.5 0 0 0 2.5 2.5 h9.5 a2.5 2.5 0 0 0 2.5 -2.5 M1198.5 349.8 v3 a1.8 1.8 0 0 0 1.8 1.8 h3"/>
</g>
<path d="M1194.6 368 l1.4 -4.6 l8.2 -8.2 a2.3 2.3 0 0 1 3.3 3.3 l-8.2 8.2 z" fill="#1267c7" stroke="#1267c7" stroke-width="1.2" stroke-linejoin="round"/>
<!-- send -->
<g class="ic" style="stroke:#fff;stroke-width:1.7">
<path d="M213.2 418.3 l20.3 9.7 l-20.3 9.7 l3.4 -9.7 z M216.6 428 h9.5"/>
</g>
<g class="ic" style="stroke:#fff;stroke-width:2"><path d="M312.5 426.8 l5 5 l5 -5"/></g>
</svg>


<div class="tl">
<span class="t" style="left:183px;top:245.5px;line-height:23px;font-size:18px;font-weight:400;color:#4a4a4a;letter-spacing:0.14px;">New mail</span>
<span class="t" style="left:187px;top:296.5px;line-height:23px;font-size:18px;font-weight:400;-webkit-text-stroke:0.55px currentColor;color:#242424;letter-spacing:-0.17px;">Message</span>
<span class="t" style="left:300px;top:296.5px;line-height:23px;font-size:18px;font-weight:400;color:#464646;letter-spacing:-0.01px;">Insert</span>
<span class="t" style="left:387px;top:296.5px;line-height:23px;font-size:18px;font-weight:400;color:#464646;letter-spacing:0.10px;">Format text</span>
<span class="t" style="left:522px;top:296.5px;line-height:23px;font-size:18px;font-weight:400;color:#464646;letter-spacing:-0.34px;">Draw</span>
<span class="t" style="left:604px;top:296.5px;line-height:23px;font-size:18px;font-weight:400;color:#464646;letter-spacing:0.33px;">Options</span>
<span class="t" style="left:244px;top:417.0px;line-height:23px;font-size:18px;font-weight:700;color:#ffffff;letter-spacing:-1.01px;">Send</span>
<span class="t" style="left:357px;top:417.0px;line-height:23px;font-size:18px;font-weight:400;-webkit-text-stroke:0.55px currentColor;color:#333;letter-spacing:-0.25px;">From:</span>
<span class="t" style="left:217px;top:486.5px;line-height:23px;font-size:18px;font-weight:400;-webkit-text-stroke:0.55px currentColor;color:#242424;letter-spacing:-1.02px;">To</span>
<span class="t" style="left:1236.5px;top:487.7px;line-height:19px;font-size:14.5px;font-weight:400;color:#555;letter-spacing:-0.43px;">Cc</span>
<span class="t" style="left:1277px;top:487.7px;line-height:19px;font-size:14.5px;font-weight:400;color:#555;letter-spacing:-0.34px;">Bcc</span>
<span class="t" style="left:194px;top:548.5px;line-height:23px;font-size:18px;font-weight:400;color:#7a7a7a;letter-spacing:-0.01px;">Add a subject</span>
<span class="t" style="left:649.5px;top:344.5px;line-height:30px;font-size:23px;font-weight:400;-webkit-text-stroke:0.55px currentColor;color:#bbbbbb;letter-spacing:-2.84px;">B</span>
</div>

</div>
</body>
</html>
